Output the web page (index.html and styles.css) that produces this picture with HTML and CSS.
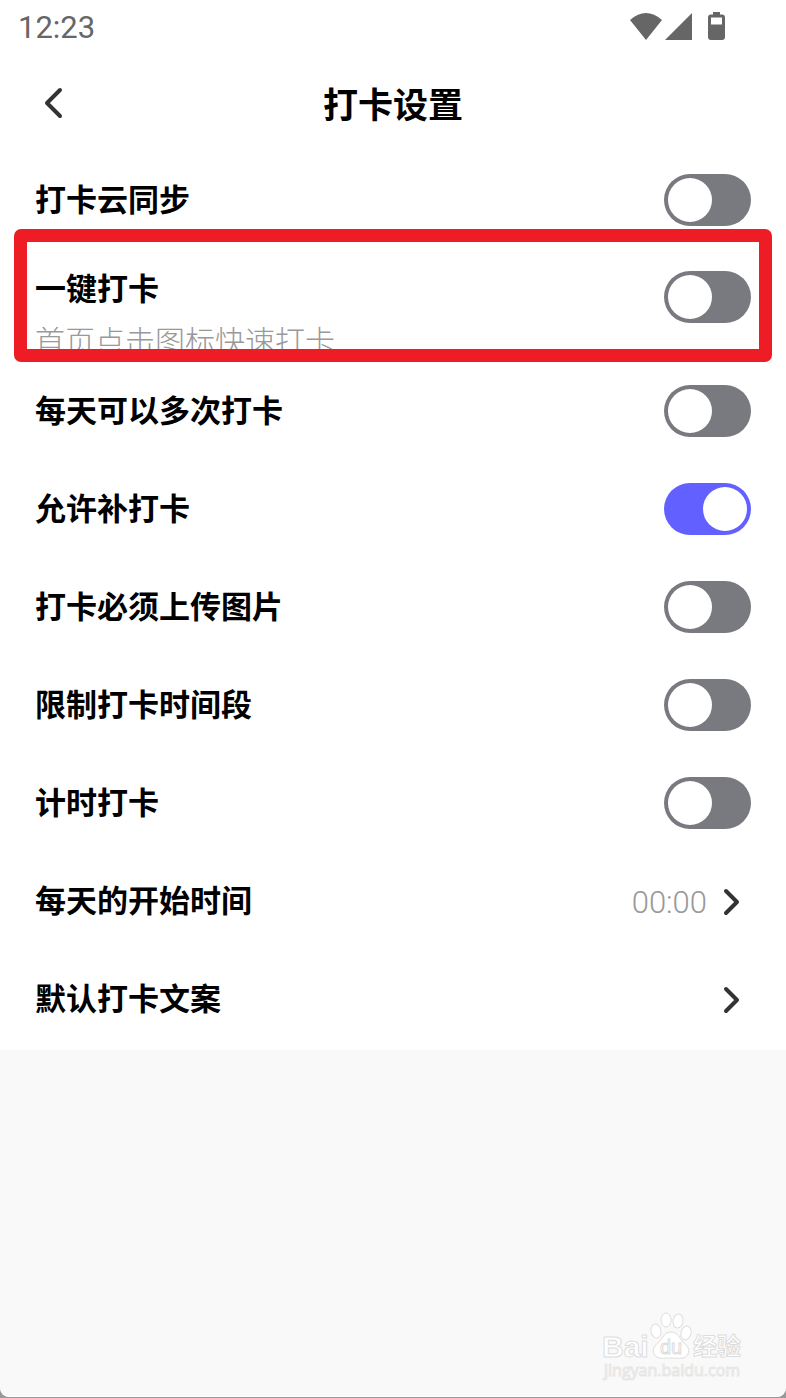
FILE: index.html
```html
<!DOCTYPE html>
<html lang="zh-CN">
<head>
    <meta charset="UTF-8">
    <meta name="viewport" content="width=device-width, initial-scale=1.0">
    <title>打卡设置</title>
    <link rel="stylesheet" href="styles.css">
</head>
<body>
    <div class="screen">
        <div class="status-bar">
            <span class="clock">12:23</span>
            <svg class="status-icons" width="98" height="32" viewBox="0 0 98 32" aria-hidden="true">
                <path d="M1 10 Q17 -4 33 10 L17 30 Z"/>
                <path d="M36 30 L63 3 V30 Z"/>
                <path fill-rule="evenodd" d="M84 2 H91 V4.500 H93 Q96 4.500 96 7.500 V27 Q96 30 93 30 H82 Q79 30 79 27 V7.500 Q79 4.500 82 4.500 H84 Z M82 7.500 V14.500 H93 V7.500 Z"/>
            </svg>
        </div>

        <header class="header">
            <button type="button" class="back" aria-label="返回">
                <svg width="22" height="36" viewBox="0 0 22 36"><path d="M18 5 L5 18 L18 31"/></svg>
            </button>
            <h1>打卡设置</h1>
        </header>

        <form class="settings">
            <div class="row">
                <label for="cloudSync">打卡云同步</label>
                <input type="checkbox" class="switch" id="cloudSync">
            </div>
            <div class="row row-highlight">
                <div class="row-text">
                    <label for="oneTap">一键打卡</label>
                    <p class="hint">首页点击图标快速打卡</p>
                </div>
                <input type="checkbox" class="switch" id="oneTap">
            </div>
            <div class="row">
                <label for="multiple">每天可以多次打卡</label>
                <input type="checkbox" class="switch" id="multiple">
            </div>
            <div class="row">
                <label for="makeUp">允许补打卡</label>
                <input type="checkbox" class="switch" id="makeUp" checked>
            </div>
            <div class="row">
                <label for="photo">打卡必须上传图片</label>
                <input type="checkbox" class="switch" id="photo">
            </div>
            <div class="row">
                <label for="timeRange">限制打卡时间段</label>
                <input type="checkbox" class="switch" id="timeRange">
            </div>
            <div class="row">
                <label for="timer">计时打卡</label>
                <input type="checkbox" class="switch" id="timer">
            </div>
            <button type="button" class="row row-link">
                <span class="name">每天的开始时间</span>
                <span class="value">00:00</span>
                <svg class="chevron" width="20" height="30" viewBox="0 0 20 30"><path d="M5 5 L16 16 L5 27"/></svg>
            </button>
            <button type="button" class="row row-link">
                <span class="name">默认打卡文案</span>
                <svg class="chevron" width="20" height="30" viewBox="0 0 20 30"><path d="M5 5 L16 16 L5 27"/></svg>
            </button>
        </form>

        <svg class="watermark" width="146" height="74" viewBox="0 0 146 74" role="img" aria-label="Baidu经验">
            <text class="mark-latin" x="2" y="47">Bai</text>
            <ellipse cx="56" cy="21" rx="5" ry="7" transform="rotate(-12 56 21)"/>
            <ellipse cx="66" cy="10" rx="5" ry="7"/>
            <ellipse cx="78" cy="11" rx="5" ry="7" transform="rotate(8 78 11)"/>
            <ellipse cx="86" cy="23" rx="5" ry="7" transform="rotate(14 86 23)"/>
            <path d="M71 22 C64 22 63 28 59 32 C54 36 52 40 54 44 C57 50 64 48 71 48 C78 48 85 50 88 44 C90 40 88 36 83 32 C79 28 78 22 71 22 Z"/>
            <text class="mark-du" x="60" y="44">du</text>
            <text class="mark-cjk" x="93" y="45">经验</text>
            <text class="mark-url" x="4" y="66">jingyan.baidu.com</text>
        </svg>
    </div>
</body>
</html>
```
FILE: styles.css
```css
* {
    box-sizing: border-box;
}
body {
    margin: 0;
    background: #999;
    color: #000;
    font-family: "Noto Sans CJK SC", sans-serif;
}
.screen {
    position: relative;
    min-height: calc(100vh - 1px);
    background: #f9f9f9;
    border-radius: 0 0 9px 9px;
    box-shadow: inset 0 -1px 1px #fff;
    overflow: hidden;
}
.status-bar {
    display: flex;
    justify-content: space-between;
    align-items: center;
    height: 56px;
    padding: 0 59px 4px 18px;
    background: #fff;
}
.clock {
    padding-top: 4px;
    color: #666;
    font-family: Roboto, sans-serif;
    font-size: 31px;
    line-height: 36px;
}
.status-icons {
    fill: #666;
}
.header {
    display: grid;
    grid-template-columns: 72px 1fr 72px;
    align-items: center;
    height: 93px;
    background: #fff;
}
.header h1 {
    margin: 0;
    font-size: 35px;
    font-weight: 700;
    line-height: 48px;
    text-align: center;
}
.back {
    display: flex;
    justify-content: flex-end;
    padding: 0 8px 0 0;
    border: none;
    background: none;
    cursor: pointer;
}
.back path, .chevron path {
    fill: none;
    stroke: #333;
    stroke-width: 4;
    stroke-linecap: round;
    stroke-linejoin: round;
}
.settings {
    padding: 2px 0;
    background: #fff;
}
.row {
    display: flex;
    justify-content: space-between;
    align-items: center;
    width: 100%;
    height: 98px;
    padding: 0 35px;
    font-family: inherit;
    font-size: 31px;
    font-weight: 700;
    line-height: 46px;
}
.row > label, .name {
    padding-bottom: 4px;
}
.row-highlight {
    position: relative;
    align-items: flex-start;
    height: 113px;
    padding-top: 15px;
}
.row-highlight .switch {
    margin-top: 7px;
}
/* red frame drawn over the row and its neighbours */
.row-highlight::after {
    content: "";
    position: absolute;
    inset: -20px 14px 0;
    border: 13px solid #ee1c25;
    border-radius: 7px;
    pointer-events: none;
}
.hint {
    margin: 6px 0 0;
    color: #999;
    font-size: 30px;
    font-weight: 300;
}
.row-link {
    border: none;
    background: none;
    color: inherit;
    text-align: left;
    cursor: pointer;
}
.value {
    margin-left: auto;
    padding-top: 4px;
    color: #999;
    font-family: Roboto, sans-serif;
    font-size: 31px;
    font-weight: 300;
}
.chevron {
    margin: 0 10px 0 14px;
}
.switch {
    appearance: none;
    flex: none;
    width: 87px;
    height: 52px;
    margin: 0;
    padding: 4px;
    border-radius: 26px;
    background: #797980;
    cursor: pointer;
}
.switch::before {
    content: "";
    display: block;
    width: 44px;
    height: 44px;
    border-radius: 50%;
    background: #fff;
}
.switch:checked {
    background: #6260ff;
}
.switch:checked::before {
    margin-left: auto;
}
.watermark {
    position: absolute;
    right: 40px;
    bottom: 13px;
    fill: #fff;
    stroke: #ddd;
    stroke-width: 1;
}
.mark-latin, .mark-du {
    font-family: "Liberation Sans", sans-serif;
    font-size: 30px;
    font-weight: 700;
}
.mark-du {
    font-size: 20px;
    font-weight: 400;
}
.mark-cjk {
    font-size: 24px;
    font-weight: 700;
}
.mark-url {
    font-family: "Open Sans", sans-serif;
    font-size: 16px;
    stroke: #e6e6e6;
}
```
